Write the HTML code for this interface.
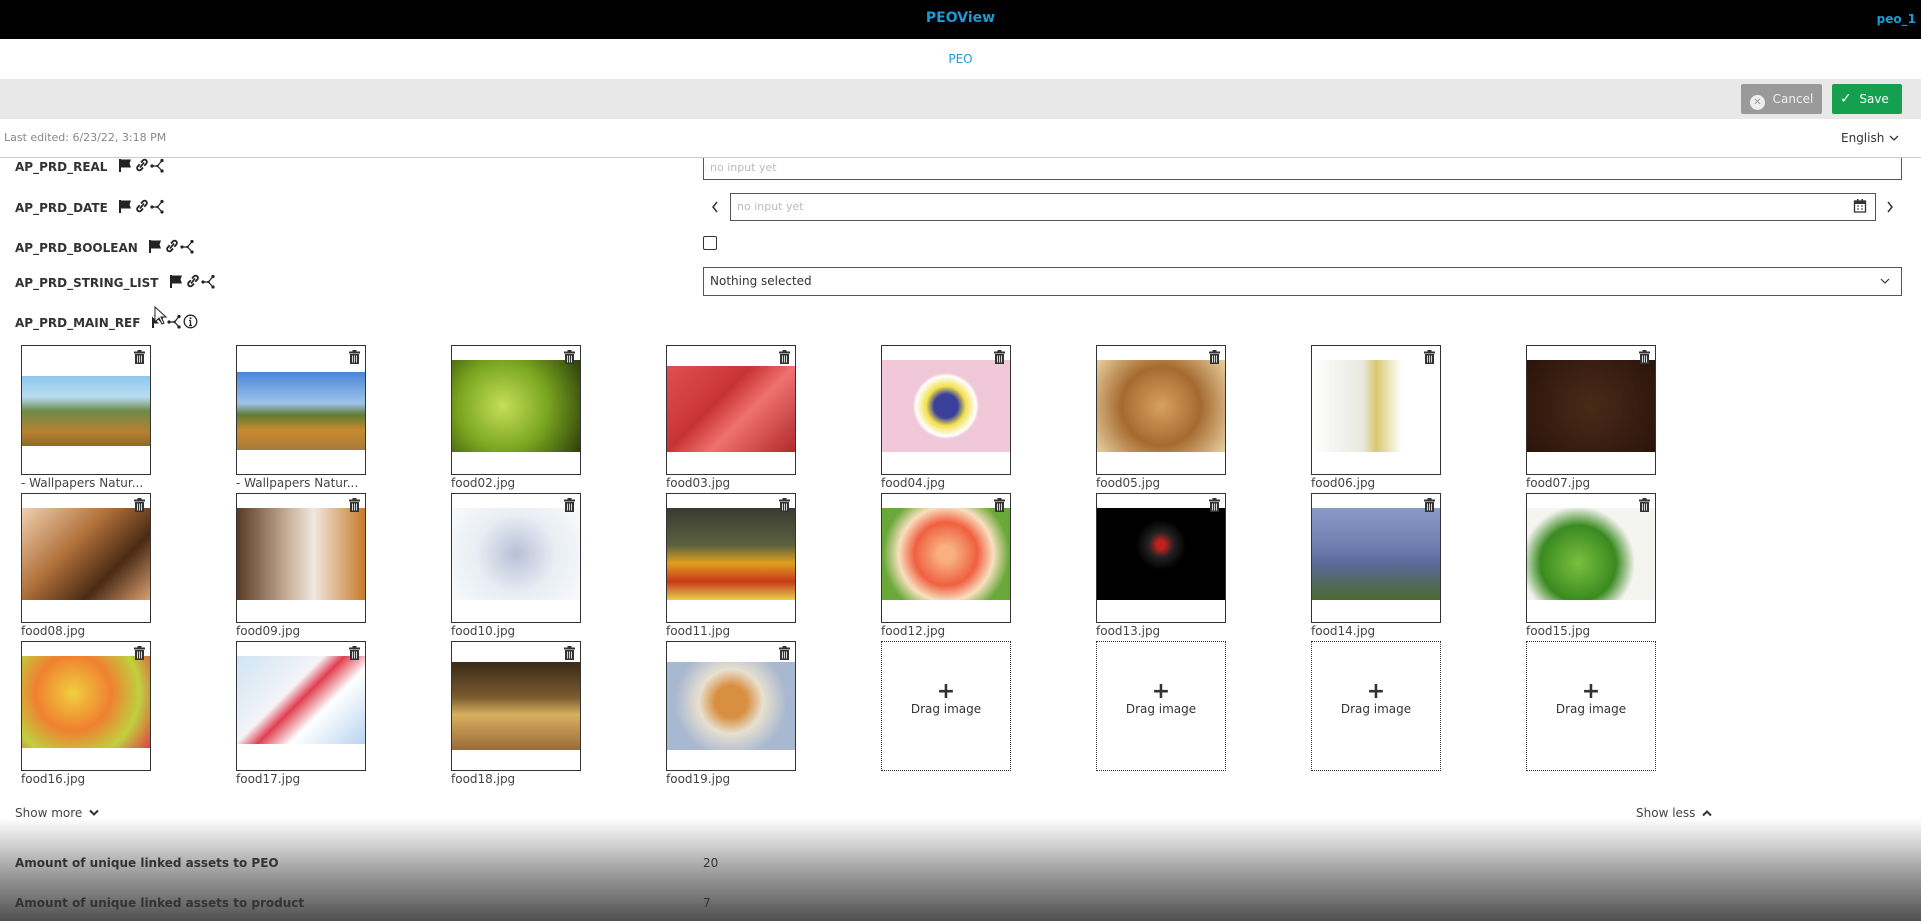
<!DOCTYPE html>
<html><head><meta charset="utf-8"><style>
*{box-sizing:border-box;margin:0;padding:0}
body{width:1921px;height:921px;overflow:hidden;background:#fff;font-family:"DejaVu Sans","Liberation Sans",sans-serif;font-size:12px;color:#333;position:relative}
.a{position:absolute}
.top{left:0;top:0;width:1921px;height:39px;background:#000}
.blue{color:#1a9bd7}
.lbl{font-weight:bold;font-size:12px;color:#333;left:15px;white-space:nowrap}
.lbl svg{vertical-align:-2px;margin-left:2px}
.inp{border:1px solid #555;background:#fff;color:#bbb;padding-left:6px;line-height:26px}
.tile{width:130px;height:130px;border:1px solid #333;background:#fff}
.tile .img{position:absolute;left:0;width:128px}
.tile .tr{position:absolute;right:5px;top:4px;width:11px;height:14px}
.cap{font-size:12px;color:#444}
.drag{width:130px;height:130px;border:1px dotted #333;text-align:center;color:#333}
.drag b{display:block;font-size:22px;margin-top:40px;line-height:20px}
</style></head><body>
<svg width="0" height="0" style="position:absolute">
<defs>
<g id="fl"><path d="M2 1v13" stroke="#222" stroke-width="2"/><path d="M3 1.5h10l-1.5 4 1.5 4H3z" fill="#222"/></g>
<g id="ln" fill="none" stroke="#222" stroke-width="1.8"><path d="M6 9.5l4-5"/><path d="M7 4.5l2-2.2a2.3 2.3 0 0 1 3.3 3.2l-2 2.3"/><path d="M9 9.5l-2 2.2a2.3 2.3 0 0 1-3.3-3.2l2-2.3"/></g>
<g id="sh" fill="#222"><circle cx="2" cy="8" r="1.6"/><circle cx="12" cy="2.5" r="1.6"/><circle cx="12" cy="13" r="1.6"/><circle cx="7.5" cy="8" r="1.2"/><path d="M2 8h5.5M7.5 8l4.5-5.5M7.5 8l4.5 5" stroke="#222" stroke-width="1.2"/></g>
</defs></svg>
<div class="a top"></div>
<div class="a blue" style="left:0;width:1921px;top:10px;text-align:center;font-weight:bold;font-size:14px">PEOView</div>
<div class="a blue" style="right:5px;top:12px;font-weight:bold;font-size:12px">peo_1</div>
<div class="a blue" style="left:0;width:1921px;top:52px;text-align:center;font-size:12px">PEO</div>
<div class="a" style="left:0;top:79px;width:1921px;height:40px;background:#e8e8e8"></div>
<div class="a" style="left:1741px;top:84px;width:81px;height:30px;background:#9a9a9a;border-radius:2px;color:#eee;font-size:12px;line-height:30px;padding-left:9px"><span style="display:inline-block;width:15px;height:15px;border-radius:8px;background:#eee;color:#999;font-size:10px;line-height:15px;text-align:center;font-weight:bold;vertical-align:-2px">✕</span>&nbsp; Cancel</div>
<div class="a" style="left:1832px;top:84px;width:70px;height:30px;background:#14a04e;border-radius:2px;color:#fff;font-size:12px;line-height:30px;padding-left:8px"><b style="font-size:14px">✓</b>&nbsp; Save</div>

<div class="a inp" style="left:703px;top:150px;width:1199px;height:30px;line-height:34px;font-size:11px">no input yet</div>
<div class="a" style="left:0;top:119px;width:1921px;height:39px;background:#fff;border-bottom:1px solid #ccc"></div>
<div class="a" style="left:4px;top:131px;color:#888;font-size:11px">Last edited: 6/23/22, 3:18 PM</div>
<div class="a" style="left:1841px;top:131px;color:#333;font-size:12px">English</div>
<svg class="a" style="left:1889px;top:134px" width="10" height="8"><path d="M1 2 L5 6 L9 2" fill="none" stroke="#333" stroke-width="1.3"/></svg>

<div class="a lbl" style="top:158px">AP_PRD_REAL &nbsp;<svg width="14" height="15"><use href="#fl"/></svg><svg width="14" height="15"><use href="#ln"/></svg><svg width="14" height="15"><use href="#sh"/></svg></div>
<div class="a lbl" style="top:199px">AP_PRD_DATE &nbsp;<svg width="14" height="15"><use href="#fl"/></svg><svg width="14" height="15"><use href="#ln"/></svg><svg width="14" height="15"><use href="#sh"/></svg></div>
<div class="a lbl" style="top:239px">AP_PRD_BOOLEAN &nbsp;<svg width="14" height="15"><use href="#fl"/></svg><svg width="14" height="15"><use href="#ln"/></svg><svg width="14" height="15"><use href="#sh"/></svg></div>
<div class="a lbl" style="top:274px">AP_PRD_STRING_LIST &nbsp;<svg width="14" height="15"><use href="#fl"/></svg><svg width="14" height="15"><use href="#ln"/></svg><svg width="14" height="15"><use href="#sh"/></svg></div>
<div class="a lbl" style="top:314px">AP_PRD_MAIN_REF &nbsp;<svg width="14" height="15"><path d="M2 1v13" stroke="#222" stroke-width="2"/><path d="M3 1.5h10l-1.5 4 1.5 4H3z" fill="#222"/><path d="M1 1l13 13" stroke="#fff" stroke-width="2"/></svg><svg width="14" height="15"><use href="#sh"/></svg><svg width="15" height="15"><circle cx="7.5" cy="7.5" r="6.3" fill="none" stroke="#222" stroke-width="1.3"/><circle cx="7.5" cy="4.3" r="1" fill="#222"/><path d="M7.5 6.5v5M6 11.5h3M6 6.5h1.5" stroke="#222" stroke-width="1.3"/></svg></div>
<svg class="a" style="left:154px;top:306px" width="14" height="20"><path d="M1 1v15l4-4 3 6 2-1-3-6h5z" fill="#fff" stroke="#222" stroke-width="1"/></svg>

<svg class="a" style="left:711px;top:201px" width="8" height="12"><path d="M6 1L2 6l4 5" fill="none" stroke="#333" stroke-width="1.5"/></svg>
<div class="a inp" style="left:730px;top:193px;width:1146px;height:28px;font-size:11px">no input yet</div>
<svg class="a" style="left:1853px;top:198px" width="14" height="16"><rect x="1.5" y="3" width="11" height="11" fill="none" stroke="#333" stroke-width="1.3"/><rect x="1.5" y="3" width="11" height="3" fill="#333"/><rect x="4" y="1" width="1.5" height="3" fill="#333"/><rect x="8.5" y="1" width="1.5" height="3" fill="#333"/><path d="M4 8h2M8 8h2M4 11h2M8 11h2" stroke="#333"/></svg>
<svg class="a" style="left:1886px;top:201px" width="8" height="12"><path d="M2 1l4 5-4 5" fill="none" stroke="#333" stroke-width="1.5"/></svg>
<div class="a" style="left:703px;top:236px;width:14px;height:14px;border:1px solid #333;border-radius:2px"></div>
<div class="a inp" style="left:703px;top:267px;width:1199px;height:29px;color:#333;font-size:12px">Nothing selected</div>
<svg class="a" style="left:1880px;top:277px" width="10" height="8"><path d="M1 2 L5 6 L9 2" fill="none" stroke="#333" stroke-width="1.2"/></svg>

<div id="g"></div>
<script>
var cols=[21,236,451,666,881,1096,1311,1526],rows=[345,493,641];
var imgs=[
["- Wallpapers Natur...","linear-gradient(#8ec8ee 0%,#b9dcf0 30%,#6f8a4a 50%,#b7812f 80%,#8b6a2a)",30,70],
["- Wallpapers Natur...","linear-gradient(#4a86d8 0%,#9ec3ec 40%,#5f7c33 55%,#c98a2e 75%,#a67a3a)",26,78],
["food02.jpg","radial-gradient(circle at 40% 50%,#c5df5a,#7aa51f 50%,#2d3f0a)",14,92],
["food03.jpg","linear-gradient(135deg,#e05050,#c83434 40%,#f07070 60%,#b02a2a)",20,86],
["food04.jpg","radial-gradient(circle,#3a3f9a 15%,#f2e04a 25%,#fff 38%,#f0c8d8 42%)",14,92],
["food05.jpg","radial-gradient(circle at 50% 50%,#d8a060,#a56a30 50%,#e8d0a0)",14,92],
["food06.jpg","linear-gradient(90deg,#fff,#e8e8e0 40%,#d8c870 50%,#fff 70%)",14,92],
["food07.jpg","radial-gradient(circle,#4a2a18,#2a140a)",14,92],
["food08.jpg","linear-gradient(135deg,#f0d0b0,#b0703a 40%,#4a2a14 70%,#d8a070)",14,92],
["food09.jpg","linear-gradient(90deg,#5a3a24,#c8b098 40%,#f0e8e0 60%,#c87a2a)",14,92],
["food10.jpg","radial-gradient(circle,#b8c0d8,#e8eef4 50%,#fafafa)",14,92],
["food11.jpg","linear-gradient(#3a3a30 0%,#5a6040 40%,#e0a020 60%,#c83a1a 80%,#e8d050)",14,92],
["food12.jpg","radial-gradient(circle,#f8b080 10%,#f06040 40%,#f8e0c0 60%,#6aa83a 80%)",14,92],
["food13.jpg","radial-gradient(circle at 50% 40%,#c02020 5%,#222 15%,#000 30%)",14,92],
["food14.jpg","linear-gradient(#8a9ac8,#7080b0 40%,#5a6a9a 60%,#4a6a30)",14,92],
["food15.jpg","radial-gradient(circle at 40% 60%,#7ac040,#3a8a20 40%,#f4f4f0 60%)",14,92],
["food16.jpg","radial-gradient(circle at 40% 40%,#f0d040,#f08030 40%,#c0d040 70%,#e04040)",14,92],
["food17.jpg","linear-gradient(135deg,#d0e4f4,#f4f4f8 40%,#e04050 50%,#fff 65%,#b8d4f0)",14,88],
["food18.jpg","linear-gradient(#3a2a18,#7a5a30 40%,#d8b060 60%,#9a6a3a)",20,88],
["food19.jpg","radial-gradient(circle at 50% 45%,#d89040 20%,#e8e0d0 40%,#a8b8d0 70%)",20,88]];
var h="",k=0;
for(var r=0;r<3;r++)for(var c=0;c<8;c++){var x=cols[c],y=rows[r];
 if(k<imgs.length){var d=imgs[k];
  h+='<div class="a tile" style="left:'+x+'px;top:'+y+'px"><div class="img" style="top:'+d[2]+'px;height:'+d[3]+'px;background:'+d[1]+'"></div><svg class="tr" viewBox="0 0 11 14"><rect x="0" y="1.5" width="11" height="2" fill="#333"/><rect x="3.5" y="0" width="4" height="2" fill="#333"/><rect x="1" y="4" width="9" height="10" fill="#333"/><path d="M3.5 5.5v7M5.5 5.5v7M7.5 5.5v7" stroke="#fff" stroke-width="0.8"/></svg></div>';
  h+='<div class="a cap" style="left:'+x+'px;top:'+(y+131)+'px">'+d[0]+'</div>';
 } else {
  h+='<div class="a drag" style="left:'+x+'px;top:'+y+'px"><b>+</b>Drag image</div>';
 }
 k++;}
document.getElementById("g").innerHTML=h;
</script>
<div class="a" style="left:15px;top:806px;color:#444">Show more <svg width="10" height="8" style="margin-left:3px"><path d="M1 1.5L5 5.5 9 1.5" fill="none" stroke="#333" stroke-width="2"/></svg></div>
<div class="a" style="left:1636px;top:806px;color:#444">Show less <svg width="10" height="8" style="margin-left:3px"><path d="M1 6.5L5 2.5 9 6.5" fill="none" stroke="#333" stroke-width="2"/></svg></div>
<div class="a" style="left:0;top:818px;width:1921px;height:103px;background:linear-gradient(#fff 0%,#d8d8d8 22%,#9a9a9a 55%,#505050 100%)"></div>
<div class="a lbl" style="top:856px">Amount of unique linked assets to PEO</div>
<div class="a" style="left:703px;top:856px">20</div>
<div class="a lbl" style="top:896px">Amount of unique linked assets to product</div>
<div class="a" style="left:703px;top:896px">7</div>
</body></html>
